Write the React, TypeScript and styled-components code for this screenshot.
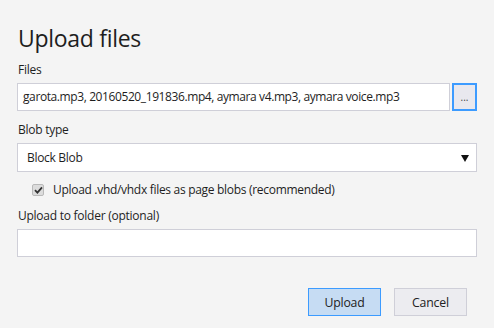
import React from 'react'
import styled, {createGlobalStyle} from 'styled-components'

const GlobalStyle = createGlobalStyle`
  body {
    margin: 0;
    background: #f4f4f4;
    font-family: "Open Sans", "Noto Sans", sans-serif;
    color: #1e1e1e;
  }
`;

const Dialog = styled.div`
  display: flex;
  flex-direction: column;
  width: 494px;
  height: 328px;
  box-sizing: border-box;
  padding: 20px 17px 0 17px;
`;

const Title = styled.h1`
  margin: 0 0 0 1px;
  font-size: 23px;
  font-weight: 400;
  line-height: 36px;
  letter-spacing: -0.3px;
`;

const Label = styled.label<{top?: number}>`
  display: block;
  margin: ${p => p.top ?? 0}px 0 0 1px;
  font-size: 12px;
  line-height: 17px;
  height: 17px;
  letter-spacing: -0.25px;
`;

const Row = styled.div`
  display: flex;
  gap: 2px;
  margin-top: 5px;
`;

const TextBox = styled.div`
  flex: 1;
  box-sizing: border-box;
  height: 28px;
  padding: 0 5px;
  background: #fff;
  border: 1px solid #cfcfd8;
  font-size: 12px;
  line-height: 26px;
  white-space: nowrap;
  overflow: hidden;
  letter-spacing: -0.4px;
`;

const FolderBox = styled(TextBox)`
  flex: none;
  margin-top: 5px;
`;

const BrowseButton = styled.button`
  width: 25px;
  height: 28px;
  box-sizing: border-box;
  padding: 0;
  border: 2px solid #3c9bff;
  background: #e8e8ee;
  font-family: inherit;
  font-size: 10px;
  color: #444;
  line-height: 20px;
`;

const Select = styled.div`
  position: relative;
  box-sizing: border-box;
  height: 29px;
  margin-top: 5px;
  padding: 0 9px;
  background: #fff;
  border: 1px solid #cfcfd8;
  font-size: 12px;
  line-height: 27px;
  letter-spacing: -0.3px;
`;

const Caret = styled.span`
  position: absolute;
  right: 7px;
  top: 11px;
  width: 0;
  height: 0;
  border-left: 4px solid transparent;
  border-right: 4px solid transparent;
  border-top: 7px solid #111;
`;

const CheckRow = styled.div`
  display: flex;
  align-items: center;
  gap: 9px;
  margin: 9px 0 0 15px;
  font-size: 12px;
  line-height: 17px;
  letter-spacing: -0.3px;
`;

const Check = styled.span`
  display: flex;
  align-items: center;
  justify-content: center;
  width: 12px;
  height: 12px;
  box-sizing: border-box;
  border: 1px solid #b9b9b9;
  border-radius: 2px;
  background: #dcdcdc;
`;

const Footer = styled.div`
  display: flex;
  justify-content: flex-end;
  gap: 13px;
  margin-top: 31px;
  padding-right: 10px;
`;

const Button = styled.button<{primary?: boolean}>`
  width: 73px;
  height: 28px;
  box-sizing: border-box;
  border: 1px solid ${p => (p.primary ? '#3c9bff' : '#cfcfd8')};
  background: ${p => (p.primary ? '#c6dcf3' : '#ececf0')};
  font-family: inherit;
  font-size: 12.3px;
  letter-spacing: -0.2px;
  color: #222;
  padding: 0;
`;

export default function App() {
  return (
    <>
      <GlobalStyle />
      <Dialog>
        <Title>Upload files</Title>
        <Label top={5}>Files</Label>
        <Row>
          <TextBox>garota.mp3, 20160520_191836.mp4, aymara v4.mp3, aymara voice.mp3</TextBox>
          <BrowseButton>...</BrowseButton>
        </Row>
        <Label top={10}>Blob type</Label>
        <Select>
          Block Blob
          <Caret />
        </Select>
        <CheckRow>
          <Check>
            <svg width="9" height="8" viewBox="0 0 9 8">
              <path d="M1 4.2 L3.4 6.6 L8 1.4" fill="none" stroke="#333" strokeWidth="1.8" />
            </svg>
          </Check>
          Upload .vhd/vhdx files as page blobs (recommended)
        </CheckRow>
        <Label top={9}>Upload to folder (optional)</Label>
        <FolderBox />
        <Footer>
          <Button primary>Upload</Button>
          <Button>Cancel</Button>
        </Footer>
      </Dialog>
    </>
  )
}
